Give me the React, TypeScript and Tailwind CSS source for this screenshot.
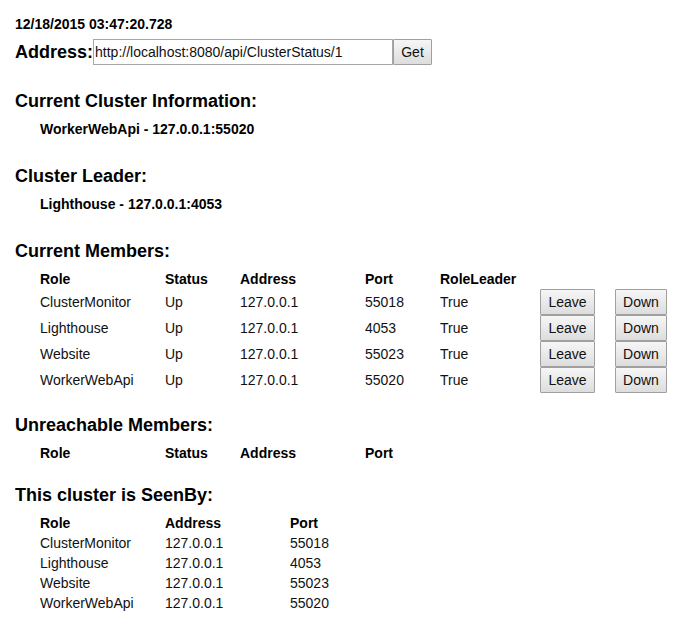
const members = [
  { role: "ClusterMonitor", port: "55018" },
  { role: "Lighthouse", port: "4053" },
  { role: "Website", port: "55023" },
  { role: "WorkerWebApi", port: "55020" },
];

const heading = "text-lg/5 font-bold text-black";
const tableStyle = "mt-2 ml-[25px] table-fixed border-collapse text-left";
const button =
  "h-[26px] rounded-[1px] border border-[#a0a0a0] bg-linear-to-b from-[#f6f6f6] to-[#dddddd] text-center";

export default function App() {
  return (
    <main className="min-h-screen bg-white px-[15px] pt-[14px] pb-6 font-['Liberation_Sans',Arial,sans-serif] text-sm/5 text-[#111111]">
      <p className="font-bold text-black">12/18/2015 03:47:20.728</p>
      <form className="mt-[5px] flex items-center" onSubmit={(e) => e.preventDefault()}>
        <label htmlFor="address" className={heading}>Address:</label>
        <input
          id="address"
          type="text"
          defaultValue="http://localhost:8080/api/ClusterStatus/1"
          className="h-[26px] w-[300px] border border-[#a6a6a6] px-px"
        />
        <button type="submit" className={`${button} w-[39px]`}>Get</button>
      </form>

      <h2 className={`${heading} mt-[26px]`}>Current Cluster Information:</h2>
      <p className="mt-2 ml-[25px] font-bold text-black">WorkerWebApi - 127.0.0.1:55020</p>

      <h2 className={`${heading} mt-[27px]`}>Cluster Leader:</h2>
      <p className="mt-2 ml-[25px] font-bold text-black">Lighthouse - 127.0.0.1:4053</p>

      <h2 className={`${heading} mt-[27px]`}>Current Members:</h2>
      <table className={`${tableStyle} w-[630px]`}>
        <colgroup>
          <col className="w-[125px]" />
          <col className="w-[75px]" />
          <col className="w-[125px]" />
          <col className="w-[75px]" />
          <col className="w-[100px]" />
          <col className="w-[75px]" />
          <col className="w-[55px]" />
        </colgroup>
        <thead className="text-black">
          <tr>
            <th>Role</th>
            <th>Status</th>
            <th>Address</th>
            <th>Port</th>
            <th>RoleLeader</th>
            <td />
            <td />
          </tr>
        </thead>
        <tbody>
          {members.map((m) => (
            <tr key={m.role} className="h-[26px]">
              <td>{m.role}</td>
              <td>Up</td>
              <td>127.0.0.1</td>
              <td>{m.port}</td>
              <td>True</td>
              <td>
                <button type="button" className={`${button} block w-[55px]`}>Leave</button>
              </td>
              <td>
                <button type="button" className={`${button} block w-[52px]`}>Down</button>
              </td>
            </tr>
          ))}
        </tbody>
      </table>

      <h2 className={`${heading} mt-[22px]`}>Unreachable Members:</h2>
      <table className={`${tableStyle} w-[400px]`}>
        <colgroup>
          <col className="w-[125px]" />
          <col className="w-[75px]" />
          <col className="w-[125px]" />
          <col className="w-[75px]" />
        </colgroup>
        <thead className="text-black">
          <tr>
            <th>Role</th>
            <th>Status</th>
            <th>Address</th>
            <th>Port</th>
          </tr>
        </thead>
      </table>

      <h2 className={`${heading} mt-[22px]`}>This cluster is SeenBy:</h2>
      <table className={`${tableStyle} w-[325px]`}>
        <colgroup>
          <col className="w-[125px]" />
          <col className="w-[125px]" />
          <col className="w-[75px]" />
        </colgroup>
        <thead className="text-black">
          <tr>
            <th>Role</th>
            <th>Address</th>
            <th>Port</th>
          </tr>
        </thead>
        <tbody>
          {members.map((m) => (
            <tr key={m.role}>
              <td>{m.role}</td>
              <td>127.0.0.1</td>
              <td>{m.port}</td>
            </tr>
          ))}
        </tbody>
      </table>
    </main>
  );
}
